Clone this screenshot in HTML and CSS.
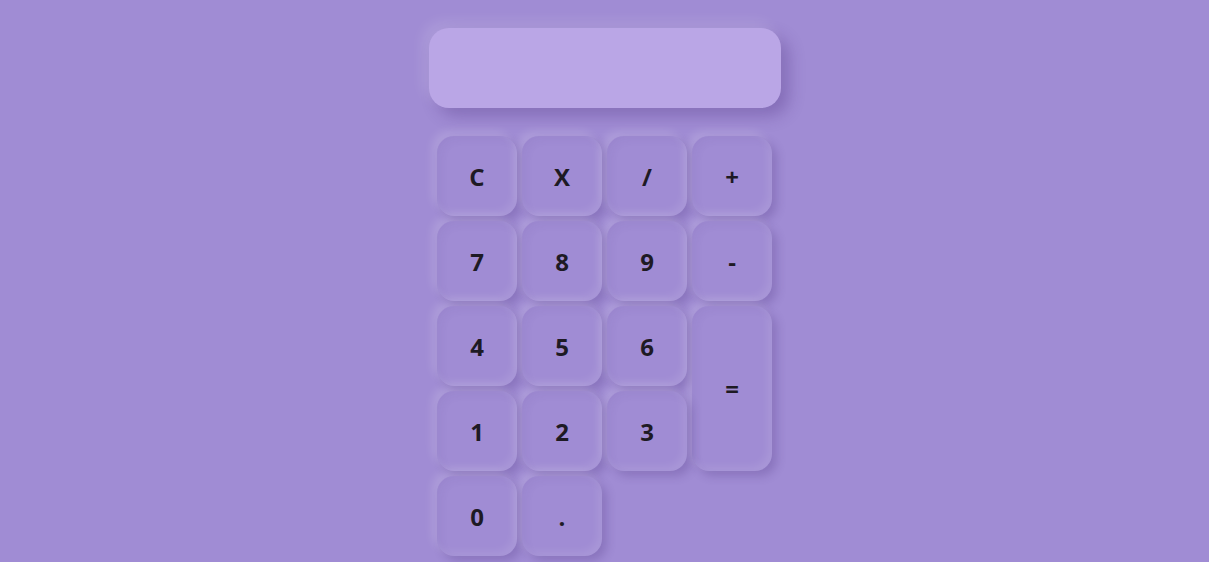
FILE: index.html
```html
<!DOCTYPE html>
<html>
<head>
<meta charset="utf-8">
<link rel="stylesheet" href="styles.css">
</head>
<body>
<div class="calc">
  <div class="display"></div>
  <div class="keys">
    <button class="key">C</button>
    <button class="key">X</button>
    <button class="key">/</button>
    <button class="key">+</button>
    <button class="key">7</button>
    <button class="key">8</button>
    <button class="key">9</button>
    <button class="key">-</button>
    <button class="key">4</button>
    <button class="key">5</button>
    <button class="key">6</button>
    <button class="key key-eq">=</button>
    <button class="key">1</button>
    <button class="key">2</button>
    <button class="key">3</button>
    <button class="key">0</button>
    <button class="key">.</button>
  </div>
</div>
</body>
</html>
```

FILE: styles.css
```css
html, body {
  margin: 0;
  padding: 0;
  height: 100%;
  background: #a08cd4;
  overflow: hidden;
}
body {
  font-family: "Open Sans", "Noto Sans", sans-serif;
}
.calc {
  display: flex;
  flex-direction: column;
  align-items: center;
  padding-top: 28px;
}
.display {
  width: 352px;
  height: 80px;
  border-radius: 20px;
  background: #baa6e6;
  box-shadow: -6px -6px 14px rgba(255,255,255,0.14), 8px 8px 16px rgba(60,30,110,0.28);
}
.keys {
  margin-top: 28px;
  display: grid;
  grid-template-columns: repeat(4, 80px);
  grid-auto-rows: 80px;
  gap: 5px;
}
.key {
  border: none;
  outline: none;
  border-radius: 17px;
  background: #a08cd4;
  color: #1e1a24;
  font-family: "Open Sans", "Noto Sans", sans-serif;
  font-weight: 700;
  font-size: 24px;
  line-height: 1;
  padding: 1px 0 0;
  box-shadow: -5px -5px 10px rgba(255,255,255,0.15), 5px 5px 10px rgba(60,30,110,0.22),
    inset -4px -4px 8px rgba(255,255,255,0.1), inset 4px 4px 8px rgba(60,30,110,0.05);
}
.key-eq {
  grid-column: 4;
  grid-row: 3 / span 2;
}
```
